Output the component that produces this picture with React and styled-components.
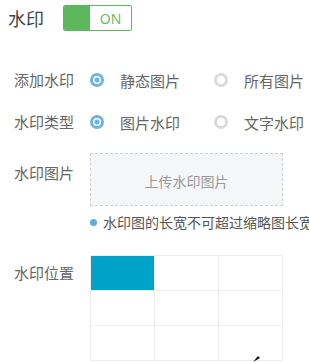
import React, { useState } from "react";
import styled, { createGlobalStyle } from "styled-components";

const GlobalStyle = createGlobalStyle`
  body {
    margin: 0;
    background: #fff;
    font-family: "Noto Sans CJK SC", "Noto Sans", sans-serif;
    overflow: hidden;
  }
`;

const positions = [0, 1, 2, 3, 4, 5, 6, 7, 8];

const App = () => {
  const [addMode, setAddMode] = useState("static");
  const [markType, setMarkType] = useState("image");
  const [pos, setPos] = useState(0);

  return (
    <Page>
      <GlobalStyle />
      <Header>
        <Title>水印</Title>
        <Toggle>
          <ToggleKnob />
          <ToggleLabel>ON</ToggleLabel>
        </Toggle>
      </Header>

      <Form>
        <Row>
          <Label>添加水印</Label>
          <Options>
            <Option onClick={() => setAddMode("static")}>
              <Radio $checked={addMode === "static"} />
              静态图片
            </Option>
            <Option onClick={() => setAddMode("all")}>
              <Radio $checked={addMode === "all"} />
              所有图片
            </Option>
          </Options>
        </Row>

        <Row $gap={12}>
          <Label>水印类型</Label>
          <Options>
            <Option onClick={() => setMarkType("image")}>
              <Radio $checked={markType === "image"} />
              图片水印
            </Option>
            <Option onClick={() => setMarkType("text")}>
              <Radio $checked={markType === "text"} />
              文字水印
            </Option>
          </Options>
        </Row>

        <Row $gap={16} $top>
          <Label $pad={10}>水印图片</Label>
          <div>
            <Upload>上传水印图片</Upload>
            <Hint>
              <Dot />
              水印图的长宽不可超过缩略图长宽
            </Hint>
          </div>
        </Row>

        <Row $gap={24} $top>
          <Label $pad={8}>水印位置</Label>
          <PosGrid>
            {positions.map((p) => (
              <Cell key={p} $active={p === pos} onClick={() => setPos(p)} />
            ))}
          </PosGrid>
        </Row>
      </Form>

      <Cursor width="10" height="8" viewBox="0 0 10 8">
        <path d="M1 8 L6 2 L8 4 Z" fill="#111" />
      </Cursor>
    </Page>
  );
};

const Page = styled.div`
  position: relative;
  width: 309px;
  height: 362px;
  overflow: hidden;
`;

const Header = styled.div`
  display: flex;
  align-items: center;
  gap: 19px;
  height: 36px;
  padding-left: 8px;
`;

const Title = styled.span`
  font-size: 18px;
  color: #444;
`;

const Toggle = styled.div`
  display: flex;
  width: 69px;
  height: 26px;
  box-sizing: border-box;
  border: 1px solid #5cb85c;
  border-radius: 2px;
  overflow: hidden;
`;

const ToggleKnob = styled.div`
  width: 26px;
  background: #5cb85c;
`;

const ToggleLabel = styled.div`
  flex: 1;
  display: flex;
  align-items: center;
  justify-content: center;
  color: #5cb85c;
  font-family: "Open Sans", "Noto Sans", sans-serif;
  font-size: 14px;
`;

const Form = styled.div`
  margin-top: 29px;
  padding-left: 14px;
`;

const Row = styled.div`
  display: grid;
  grid-template-columns: 76px 1fr;
  align-items: ${(p) => (p.$top ? "start" : "center")};
  min-height: 30px;
  margin-top: ${(p) => p.$gap || 0}px;
`;

const Label = styled.div`
  font-size: 15px;
  line-height: 20px;
  color: #666;
  padding-top: ${(p) => p.$pad || 0}px;
  white-space: nowrap;
`;

const Options = styled.div`
  display: flex;
  align-items: center;
`;

const Option = styled.label`
  display: flex;
  align-items: center;
  gap: 16px;
  width: 124px;
  font-size: 15px;
  color: #666;
  white-space: nowrap;
  cursor: pointer;
`;

const Radio = styled.span`
  width: 14px;
  height: 14px;
  box-sizing: border-box;
  border-radius: 50%;
  border: 3.5px solid ${(p) => (p.$checked ? "#6cb3e6" : "#dadada")};
  background: ${(p) =>
    p.$checked
      ? "radial-gradient(circle, #6cb3e6 0 2.3px, #fff 2.8px)"
      : "#fff"};
  flex-shrink: 0;
`;

const Upload = styled.div`
  width: 193px;
  height: 53px;
  box-sizing: border-box;
  border: 1px dashed #cfd2d6;
  background: #f5f6f8;
  display: flex;
  align-items: center;
  justify-content: center;
  padding-top: 2px;
  font-size: 14px;
  color: #999;
`;

const Hint = styled.div`
  display: flex;
  align-items: center;
  margin-top: 7px;
  line-height: 18px;
  font-size: 14px;
  color: #555;
  white-space: nowrap;
`;

const Dot = styled.span`
  width: 7px;
  height: 7px;
  border-radius: 50%;
  background: #5aaee0;
  margin-right: 6px;
  flex-shrink: 0;
`;

const PosGrid = styled.div`
  display: grid;
  grid-template-columns: repeat(3, 63px);
  grid-auto-rows: 34px;
  gap: 1px;
  width: fit-content;
  border: 1px solid #eee;
  background: #eee;
`;

const Cell = styled.div`
  background: ${(p) => (p.$active ? "#00a2c8" : "#fff")};
  cursor: pointer;
`;

const Cursor = styled.svg`
  position: absolute;
  left: 252px;
  top: 354px;
`;

export default App;
